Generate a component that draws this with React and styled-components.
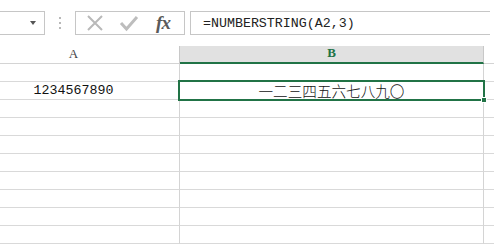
import React from 'react';
import styled, { createGlobalStyle } from 'styled-components';

const GlobalStyle = createGlobalStyle`
  html, body {
    margin: 0;
    padding: 0;
    background: #fff;
  }
  * {
    box-sizing: border-box;
  }
`;

const Sheet = styled.div`
  width: 494px;
  height: 250px;
  overflow: hidden;
  background: #fff;
  font-family: 'Liberation Sans', Arial, sans-serif;
`;

const FormulaBar = styled.div`
  display: flex;
  align-items: stretch;
  height: 46px;
  padding: 11px 4px 11px 0;
`;

const NameBox = styled.div`
  position: relative;
  width: 46px;
  margin-left: -1px;
  border: 1px solid #c6c6c6;
  border-left: none;
`;

const DropArrow = styled.span`
  position: absolute;
  right: 8px;
  top: 9px;
  width: 0;
  height: 0;
  border-left: 3px solid transparent;
  border-right: 3px solid transparent;
  border-top: 4px solid #555;
`;

const Grip = styled.div`
  width: 30px;
  display: flex;
  flex-direction: column;
  align-items: center;
  justify-content: center;
  gap: 3px;
`;

const Dot = styled.span`
  width: 2px;
  height: 2px;
  background: #b8b8b8;
`;

const ButtonBox = styled.div`
  width: 110px;
  border: 1px solid #c6c6c6;
  display: flex;
  align-items: center;
  justify-content: space-around;
  padding: 0 4px 0 2px;
`;

const IconButton = styled.span`
  width: 24px;
  display: flex;
  align-items: center;
  justify-content: center;
`;

const Fx = styled.span`
  font-family: 'Liberation Serif', 'Times New Roman', serif;
  font-style: italic;
  font-weight: bold;
  font-size: 19px;
  color: #5a5a5a;
  letter-spacing: -1px;
  line-height: 1;
  padding-bottom: 2px;
`;

const FormulaInput = styled.div`
  flex: 1;
  margin-left: 5px;
  border-top: 1px solid #c6c6c6;
  border-bottom: 1px solid #c6c6c6;
  border-left: 1px solid #c6c6c6;
  display: flex;
  align-items: center;
  padding-left: 12px;
  font-family: 'Liberation Mono', 'Courier New', monospace;
  font-size: 13.3px;
  color: #222;
`;

const Grid = styled.div`
  display: grid;
  grid-template-columns: 180px 304px 1fr;
  grid-auto-rows: 18px;
`;

const HeaderCell = styled.div`
  display: flex;
  align-items: center;
  justify-content: center;
  padding-bottom: 2px;
  padding-right: ${(p) => (p.$shift ? '32px' : '0')};
  font-family: 'Liberation Serif', 'Times New Roman', serif;
  font-size: 13px;
  background: ${(p) => (p.$active ? '#e1e1e1' : '#fff')};
  color: ${(p) => (p.$active ? '#217346' : '#444')};
  font-weight: ${(p) => (p.$active ? 'bold' : 'normal')};
  border-bottom: ${(p) => (p.$active ? '2px solid #217346' : '1px solid #d4d4d4')};
  border-right: ${(p) => (p.$last ? 'none' : '1px solid #c8c8c8')};
`;

const Cell = styled.div`
  position: relative;
  display: flex;
  align-items: center;
  justify-content: center;
  border-bottom: 1px solid #d9d9d9;
  border-right: ${(p) => (p.$last ? 'none' : '1px solid #d4d4d4')};
  font-family: ${(p) =>
    p.$cjk
      ? "'Noto Sans CJK SC', 'Noto Sans', sans-serif"
      : "'Liberation Mono', 'Courier New', monospace"};
  font-size: ${(p) => (p.$cjk ? '14.6px' : '13.3px')};
  font-weight: ${(p) => (p.$cjk ? 300 : 'normal')};
  color: #111;
  padding-right: ${(p) => (p.$shift ? '32px' : '0')};
`;

const Selection = styled.div`
  position: absolute;
  z-index: 2;
  top: -2px;
  left: -2px;
  right: -2px;
  bottom: -2px;
  border: 2px solid #217346;
  pointer-events: none;
`;

const FillHandle = styled.div`
  position: absolute;
  right: -4px;
  bottom: -4px;
  width: 6px;
  height: 6px;
  background: #217346;
  border: 1px solid #fff;
`;

const rows = [
  ['', ''],
  ['1234567890', '一二三四五六七八九〇'],
  ['', ''],
  ['', ''],
  ['', ''],
  ['', ''],
  ['', ''],
  ['', ''],
  ['', ''],
  ['', ''],
];

export default function App() {
  return (
    <Sheet>
      <GlobalStyle />
      <FormulaBar>
        <NameBox>
          <DropArrow />
        </NameBox>
        <Grip>
          <Dot />
          <Dot />
          <Dot />
        </Grip>
        <ButtonBox>
          <IconButton>
            <svg width="18" height="18" viewBox="0 0 18 18">
              <path d="M2 2 L16 16 M16 2 L2 16" stroke="#b9b9b9" strokeWidth="2" fill="none" />
            </svg>
          </IconButton>
          <IconButton>
            <svg width="20" height="18" viewBox="0 0 20 18">
              <path d="M2 9 L7.5 15 L18 3" stroke="#bdbdbd" strokeWidth="3" fill="none" strokeLinejoin="miter" />
            </svg>
          </IconButton>
          <IconButton>
            <Fx>fx</Fx>
          </IconButton>
        </ButtonBox>
        <FormulaInput>=NUMBERSTRING(A2,3)</FormulaInput>
      </FormulaBar>
      <Grid>
        <HeaderCell $shift>A</HeaderCell>
        <HeaderCell $active>B</HeaderCell>
        <HeaderCell $last />
        {rows.map(([a, b], i) => (
          <React.Fragment key={i}>
            <Cell $shift>{a}</Cell>
            <Cell $cjk>
              {b}
              {i === 1 && (
                <Selection>
                  <FillHandle />
                </Selection>
              )}
            </Cell>
            <Cell $last />
          </React.Fragment>
        ))}
      </Grid>
    </Sheet>
  );
}
